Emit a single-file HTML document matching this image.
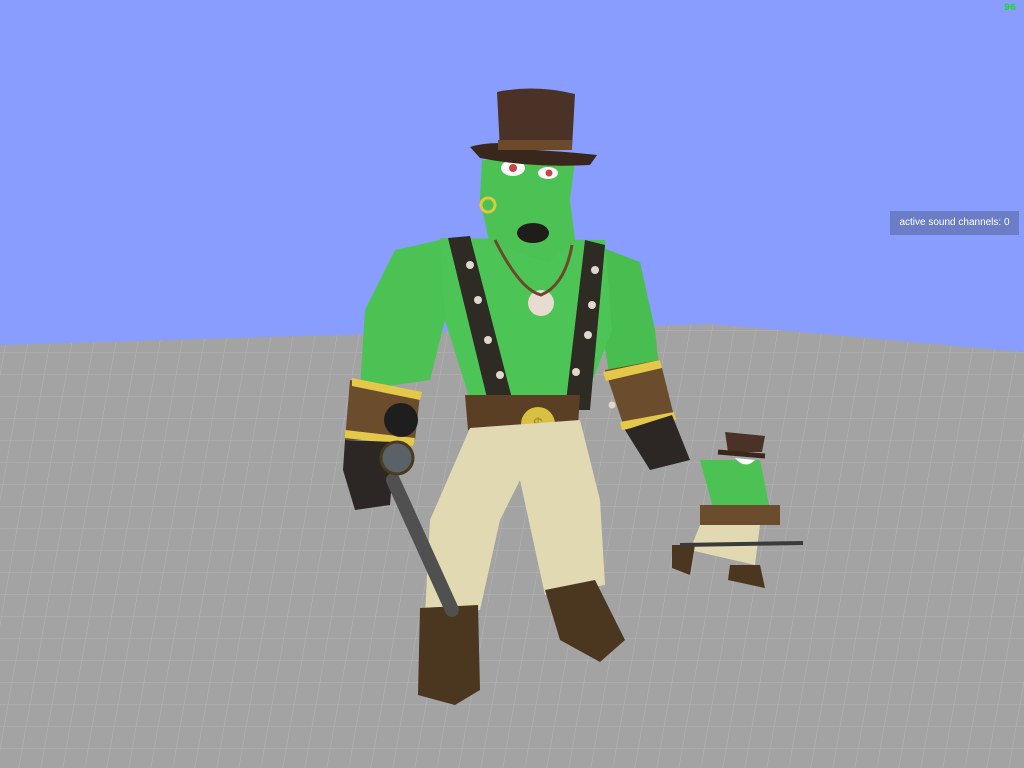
<!DOCTYPE html>
<html><head><meta charset="utf-8"><style>
html,body{margin:0;padding:0;width:1024px;height:768px;overflow:hidden;background:#889dfe}
svg{position:absolute;left:0;top:0}
.fps{position:absolute;left:1004px;top:3px;font:bold 10px "Liberation Mono",monospace;color:#10e020}
.snd{position:absolute;left:890px;top:211px;width:129px;height:24px;background:#6a7dc6;color:#fff;font:10px "Liberation Sans",sans-serif;line-height:24px;text-align:center}
</style></head><body>
<svg width="1024" height="768" viewBox="0 0 1024 768">
<defs>
<pattern id="g" width="22" height="22" patternUnits="userSpaceOnUse" patternTransform="skewX(-10)">
<rect width="22" height="22" fill="#a3a3a3"/>
<path d="M0 0H22M0 0V22" stroke="#b4b4b4" stroke-width="1"/>
</pattern>
</defs>
<rect width="1024" height="768" fill="#889dfe"/>
<polygon points="0,345 710,324 1024,352 1024,768 0,768" fill="url(#g)"/>
<g>
<path d="M395,250 L440,240 L450,300 L430,380 L360,390 L365,310 Z" fill="#4cc254"/>
<path d="M595,245 L640,262 L655,330 L660,375 L610,378 L600,320 Z" fill="#48bd50"/>
<path d="M440,238 L605,240 L612,330 L585,400 L470,400 L445,320 Z" fill="#4dc556"/>
<path d="M448,238 L470,236 L515,410 L490,410 Z" fill="#2e2a24"/>
<path d="M585,240 L605,245 L590,410 L565,410 Z" fill="#2e2a24"/>
<g fill="#e0d8cc">
<circle cx="470" cy="265" r="4"/><circle cx="478" cy="300" r="4"/><circle cx="488" cy="340" r="4"/><circle cx="500" cy="375" r="4"/>
<circle cx="595" cy="270" r="4"/><circle cx="592" cy="305" r="4"/><circle cx="588" cy="335" r="4"/><circle cx="576" cy="372" r="4"/>
<circle cx="372" cy="405" r="3.5"/><circle cx="612" cy="405" r="3.5"/><circle cx="632" cy="402" r="3.5"/><circle cx="650" cy="397" r="3.5"/>
</g>
<path d="M482,160 L575,160 L570,200 L575,240 L548,262 L490,245 L480,200 Z" fill="#4cc254"/>
<ellipse cx="513" cy="168" rx="12" ry="8" fill="#fff"/><circle cx="513" cy="168" r="4" fill="#c44"/>
<ellipse cx="548" cy="173" rx="10" ry="6" fill="#fff"/><circle cx="549" cy="173" r="3.5" fill="#c44"/>
<ellipse cx="533" cy="233" rx="16" ry="10" fill="#1f1d1a"/>
<circle cx="488" cy="205" r="7" fill="none" stroke="#e0c83c" stroke-width="3"/>
<circle cx="541" cy="303" r="13" fill="#e8dcd0"/>
<path d="M495,240 Q520,290 541,295 Q565,285 572,245" fill="none" stroke="#6a4a2a" stroke-width="3"/>
<path d="M497,92 Q535,84 575,94 L572,148 L500,150 Z" fill="#4a3226"/>
<path d="M470,147 Q500,138 535,150 Q570,152 597,155 L590,165 Q530,168 480,158 Z" fill="#3a271c"/>
<rect x="498" y="140" width="74" height="10" fill="#6b4a2c"/>
<path d="M350,380 L420,395 L415,440 L345,440 Z" fill="#6b4c2c"/>
<path d="M352,378 L422,392 L420,400 L352,386 Z M345,430 L415,438 L413,446 L345,438 Z" fill="#e3c84a"/>
<path d="M345,440 L395,442 L390,505 L355,510 L343,470 Z" fill="#2c2724"/>
<path d="M605,370 L660,360 L675,420 L625,430 Z" fill="#6b4c2c"/>
<path d="M603,372 L660,360 L662,368 L606,381 Z M620,422 L674,412 L676,420 L622,430 Z" fill="#e3c84a"/>
<path d="M625,430 L672,415 L690,460 L650,470 Z" fill="#2c2724"/>
<path d="M465,395 L580,395 L578,425 L468,430 Z" fill="#5b3f25"/>
<circle cx="538" cy="424" r="17" fill="#d8c040"/>
<text x="538" y="431" font-family="Liberation Sans,sans-serif" font-size="18" fill="#a8902a" text-anchor="middle">$</text>
<path d="M470,428 L580,420 L600,500 L605,585 L545,595 L520,480 L500,520 L480,610 L425,615 L430,520 Z" fill="#e0d9b2"/>
<path d="M420,608 L478,605 L480,690 L455,705 L418,695 Z" fill="#4b3620"/>
<path d="M545,590 L595,580 L625,640 L600,662 L560,640 Z" fill="#4b3620"/>
<line x1="393" y1="480" x2="452" y2="610" stroke="#505050" stroke-width="14" stroke-linecap="round"/>
<circle cx="401" cy="420" r="17" fill="#1e1e1e"/>
<circle cx="397" cy="458" r="16" fill="#5a6268" stroke="#4a3a20" stroke-width="3"/>
</g>
<g>
<path d="M725,432 L765,436 L762,452 L728,452 Z" fill="#4a3226"/>
<path d="M718,452 L765,456" stroke="#3a271c" stroke-width="5"/>
<path d="M700,460 L760,460 L770,510 L715,515 Z" fill="#4cc254"/>
<rect x="700" y="505" width="80" height="20" fill="#6b4c2c"/>
<path d="M700,525 L760,525 L755,565 L690,550 Z" fill="#e0d9b2"/>
<path d="M672,545 L695,545 L690,575 L672,568 Z M730,565 L760,565 L765,588 L728,580 Z" fill="#4b3620"/>
<line x1="680" y1="545" x2="803" y2="543" stroke="#3a3a3a" stroke-width="4"/>
<path d="M735,458 Q745,470 755,460" fill="#fff"/>
</g>
</svg>
<div class="fps">96</div>
<div class="snd">active sound channels: 0</div>
</body></html>
